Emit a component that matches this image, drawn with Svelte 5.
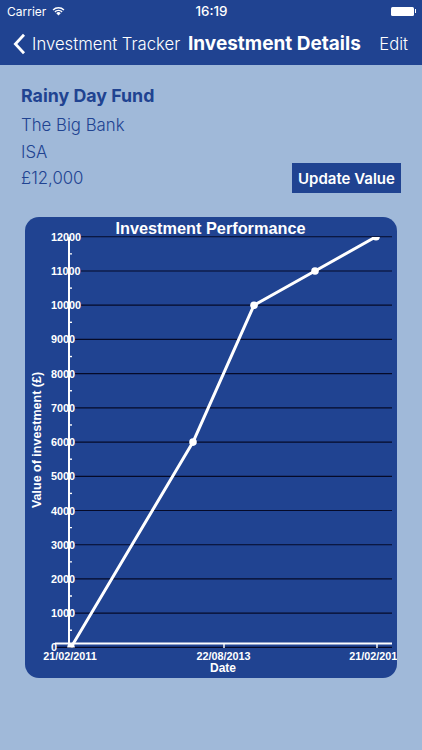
<script lang="ts">
  const ticks = Array.from({ length: 13 }, (_, i) => i * 1000);
  const yOf = (v: number) => 647.4 - v * 0.03422;
  // label widths decide where the visible part of each grid line starts
  const gridStart = (v: number) => (v >= 10000 ? 81 : v > 0 ? 75 : 56);

  const points = [
    { x: 71, v: 0 },
    { x: 193, v: 6000 },
    { x: 254, v: 10000 },
    { x: 315, v: 11000 },
    { x: 376, v: 12000 },
  ];
  const line = points.map((p) => `${p.x},${yOf(p.v)}`).join(" ");
  const minorTicks = ticks.slice(0, 12).map((v) => v + 500);
  const dates = [
    { x: 70, label: "21/02/2011" },
    { x: 223.5, label: "22/08/2013" },
    { x: 376, label: "21/02/2011" },
  ];
</script>

<div class="screen">
  <header class="head">
    <div class="status">
      <div class="status-left">
        <span>Carrier</span>
        <svg width="13" height="10" viewBox="0 0 14 10" aria-hidden="true">
          <path d="M0.6 3.4 A9 9 0 0 1 13.4 3.4 L12.3 4.5 A7.4 7.4 0 0 0 1.7 4.5 Z" fill="#fff" />
          <path d="M2.6 5.4 A6.2 6.2 0 0 1 11.4 5.4 L10.3 6.5 A4.6 4.6 0 0 0 3.7 6.5 Z" fill="#fff" />
          <path d="M4.6 7.4 A3.4 3.4 0 0 1 9.4 7.4 L7 9.8 Z" fill="#fff" />
        </svg>
      </div>
      <span class="time">16:19</span>
      <div class="battery"><i></i><b></b></div>
    </div>
    <nav class="bar">
      <div class="back">
        <svg width="13" height="22" viewBox="0 0 13 22" aria-hidden="true">
          <path d="M11 1.8 L2.4 11 L11 20.2" fill="none" stroke="#fff" stroke-width="2.8" />
        </svg>
        <span>Investment Tracker</span>
      </div>
      <strong>Investment Details</strong>
      <span class="edit">Edit</span>
    </nav>
  </header>

  <main class="body">
    <section class="info">
      <h1>Rainy Day Fund</h1>
      <p>The Big Bank</p>
      <p>ISA</p>
      <div class="value-row">
        <p>£12,000</p>
        <button>Update Value</button>
      </div>
    </section>

    <section class="card">
      <svg class="chart" width="372" height="461" viewBox="25 217 372 461">
        <defs>
          <clipPath id="plot"><rect x="50" y="237" width="342" height="410.5" /></clipPath>
        </defs>
        <text class="title" x="210.5" y="234" text-anchor="middle">Investment Performance</text>

        {#each ticks as v}
          <line class="grid" x1={gridStart(v)} x2="392" y1={yOf(v)} y2={yOf(v)} />
        {/each}

        <!-- the axis runs over the value labels, same as the original chart -->
        {#each ticks as v}
          <text class="lbl" x="51" y={yOf(v) + 4}>{v}</text>
        {/each}

        <line class="axis" x1="69" x2="69" y1="237" y2="645" />
        <line class="axis" x1="55" x2="392" y1="643.6" y2="643.6" />
        {#each minorTicks as v}
          <line class="tick" x1="69" x2="72" y1={yOf(v)} y2={yOf(v)} />
        {/each}
        <line class="tick" x1="224" x2="224" y1="644" y2="648" />
        <line class="tick" x1="377" x2="377" y1="644" y2="648" />

        <g clip-path="url(#plot)">
          <polyline class="series" points={line} />
          {#each points as p}
            <circle cx={p.x} cy={yOf(p.v)} r="3.8" fill="#fff" />
          {/each}
        </g>

        {#each dates as d}
          <text class="lbl" x={d.x} y="660" text-anchor="middle">{d.label}</text>
        {/each}
        <text class="axis-title" x="223" y="672" text-anchor="middle">Date</text>
        <text class="axis-title value" transform="translate(41 440) rotate(-90)" text-anchor="middle">Value of investment (£)</text>
      </svg>
    </section>
  </main>
</div>

<style>
  :global(body) {
    margin: 0;
    background: #a0b9d9;
  }

  .screen {
    width: 422px;
    height: 750px;
    background: #a0b9d9;
    font-family: Inter, "Liberation Sans", sans-serif;
    overflow: hidden;
  }

  .head {
    background: #204391;
    color: #fff;
    height: 65px;
  }
  .status {
    height: 22px;
    display: grid;
    grid-template-columns: 1fr auto 1fr;
    align-items: center;
    padding: 0 6px 0 7px;
    font-size: 12px;
  }
  .status-left {
    display: flex;
    align-items: center;
    gap: 6px;
  }
  .time {
    font-weight: 500;
    font-size: 13.4px;
  }
  .battery {
    justify-self: end;
    display: flex;
    align-items: center;
    gap: 1px;
  }
  .battery i {
    display: block;
    width: 23px;
    height: 9px;
    background: #fff;
    border-radius: 1.5px;
  }
  .battery b {
    display: block;
    width: 1.5px;
    height: 4px;
    background: #fff;
  }

  .bar {
    height: 43px;
    display: flex;
    align-items: center;
    padding: 0 0 0 13px;
  }
  .back {
    display: flex;
    align-items: center;
    gap: 6px;
    width: 175px;
    font-size: 16.7px;
    font-weight: 300;
    white-space: nowrap;
  }
  .bar strong {
    font-size: 19px;
    font-weight: 700;
    white-space: nowrap;
  }
  .edit {
    margin-left: auto;
    margin-right: 14px;
    font-size: 16.6px;
    font-weight: 300;
  }

  .body {
    padding: 20px 21px 0;
  }
  .info {
    color: #204391;
  }
  .info h1 {
    margin: 0 0 9px;
    font-size: 17.8px;
    line-height: 21px;
    font-weight: 700;
  }
  .info p {
    margin: 0;
    font-size: 16.8px;
    line-height: 21px;
    font-weight: 300;
  }
  .info > p {
    margin-bottom: 6px;
  }
  .value-row {
    display: flex;
    justify-content: space-between;
    align-items: center;
    height: 30px;
    margin-top: -6px;
  }
  .value-row button {
    width: 109px;
    height: 30px;
    border: 0;
    padding: 0;
    background: #204391;
    color: #fff;
    font: 600 15px Inter, "Liberation Sans", sans-serif;
  }

  .card {
    width: 372px;
    height: 461px;
    margin: 24px 0 0 4px;
    background: #204391;
    border-radius: 14px;
    overflow: hidden;
  }
  .chart {
    display: block;
  }
  .chart text {
    font-family: "Liberation Sans", Arial, sans-serif;
    font-weight: 700;
    fill: #fff;
  }
  .chart .title {
    font-size: 16.3px;
  }
  .chart .lbl {
    font-size: 10.8px;
  }
  .chart .axis-title {
    font-size: 12px;
  }
  .chart .value {
    font-size: 12.5px;
  }
  .grid {
    stroke: #050a28;
    stroke-width: 1.2;
  }
  .axis {
    stroke: #fff;
    stroke-width: 2;
  }
  .tick {
    stroke: #fff;
    stroke-width: 1.4;
  }
  .series {
    fill: none;
    stroke: #fff;
    stroke-width: 3;
    stroke-linejoin: round;
  }
</style>
